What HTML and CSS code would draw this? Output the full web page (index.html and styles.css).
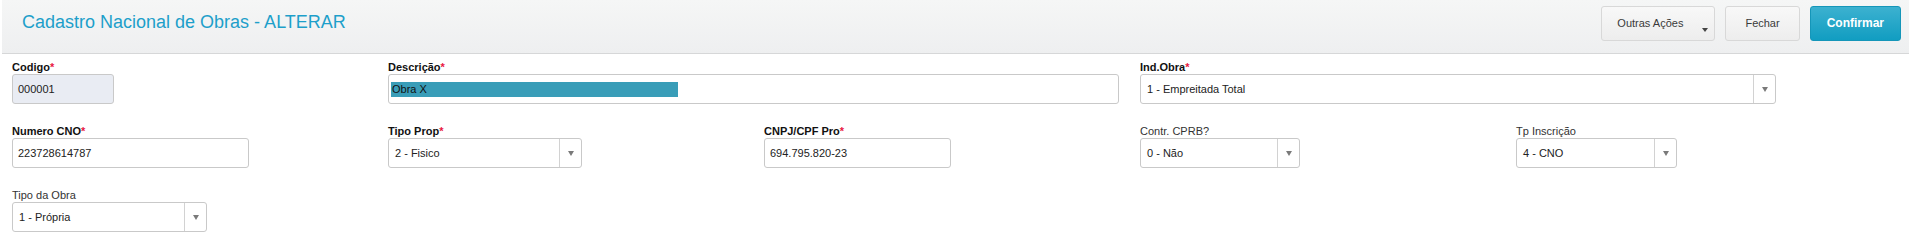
FILE: index.html
```html
<!DOCTYPE html>
<html lang="pt-BR">
<head>
<meta charset="utf-8">
<title>Cadastro Nacional de Obras - ALTERAR</title>
<link rel="stylesheet" href="styles.css">
</head>
<body>
<header class="topbar">
  <h1 class="title">Cadastro Nacional de Obras - ALTERAR</h1>
  <div class="actions">
    <button class="btn btn-menu"><span>Outras Ações</span><span class="caret"></span></button>
    <button class="btn btn-close">Fechar</button>
    <button class="btn btn-primary">Confirmar</button>
  </div>
</header>

<main class="form">
  <div class="field">
    <div class="lbl req">Codigo<span class="ast">*</span></div>
    <div class="box box-disabled w-codigo">000001</div>
  </div>
  <div class="field span2">
    <div class="lbl req">Descrição<span class="ast">*</span></div>
    <div class="box box-text w-desc"><span class="sel">Obra X</span></div>
  </div>
  <div class="field span2">
    <div class="lbl req">Ind.Obra<span class="ast">*</span></div>
    <div class="box select w-ind"><span class="val">1 - Empreitada Total</span><span class="arrow"><span class="tri"></span></span></div>
  </div>

  <div class="field">
    <div class="lbl req">Numero CNO<span class="ast">*</span></div>
    <div class="box w-cno">223728614787</div>
  </div>
  <div class="field">
    <div class="lbl req">Tipo Prop<span class="ast">*</span></div>
    <div class="box select w-prop"><span class="val">2 - Fisico</span><span class="arrow"><span class="tri"></span></span></div>
  </div>
  <div class="field">
    <div class="lbl req">CNPJ/CPF Pro<span class="ast">*</span></div>
    <div class="box w-cnpj">694.795.820-23</div>
  </div>
  <div class="field">
    <div class="lbl">Contr. CPRB?</div>
    <div class="box select w-cprb"><span class="val">0 - Não</span><span class="arrow"><span class="tri"></span></span></div>
  </div>
  <div class="field">
    <div class="lbl">Tp Inscrição</div>
    <div class="box select w-insc"><span class="val">4 - CNO</span><span class="arrow"><span class="tri"></span></span></div>
  </div>

  <div class="field">
    <div class="lbl">Tipo da Obra</div>
    <div class="box select w-tipo"><span class="val">1 - Própria</span><span class="arrow"><span class="tri"></span></span></div>
  </div>
</main>
</body>
</html>
```

FILE: styles.css
```css
* { box-sizing: border-box; }

html, body {
  margin: 0;
  padding: 0;
  background: #ffffff;
  font-family: "Liberation Sans", Arial, sans-serif;
  color: #222;
}

.topbar {
  margin-left: 2px;
  height: 54px;
  display: flex;
  justify-content: space-between;
  align-items: flex-start;
  background: linear-gradient(to bottom, #f5f6f6 0%, #eeeff0 100%);
  border-bottom: 1px solid #d6d7d8;
}

.title {
  margin: 12px 0 0 20px;
  font-size: 18px;
  line-height: 20px;
  font-weight: normal;
  color: #1d9fca;
}

.actions {
  display: flex;
  gap: 10px;
  margin: 6px 8px 0 0;
}

.btn {
  height: 35px;
  border-radius: 3px;
  font-family: "Liberation Sans", Arial, sans-serif;
  font-size: 11px;
  line-height: 13px;
  display: flex;
  align-items: center;
  cursor: pointer;
}

.btn-menu, .btn-close {
  border: 1px solid #d8d8d8;
  background: linear-gradient(to bottom, #f8f8f8 0%, #ededed 100%);
  color: #3a3a3a;
}

.btn-menu {
  padding: 0 6px 0 15px;
}

.btn-menu .caret {
  align-self: flex-end;
  margin: 0 0 8px 19px;
  width: 0;
  height: 0;
  border-left: 3.5px solid transparent;
  border-right: 3.5px solid transparent;
  border-top: 4px solid #444;
}

.btn-close {
  padding: 0 19px;
}

.btn-primary {
  padding: 0 16px;
  border: 1px solid #1596b9;
  background: linear-gradient(to bottom, #3cb1d0 0%, #119dc1 100%);
  color: #ffffff;
  font-weight: bold;
  font-size: 12px;
}

.form {
  display: grid;
  grid-template-columns: repeat(5, 1fr);
  row-gap: 20px;
  padding: 6px 17px 0 12px;
}

.field {
  display: flex;
  flex-direction: column;
  align-items: flex-start;
}

.span2 { grid-column: span 2; }

.lbl {
  height: 14px;
  font-size: 11px;
  line-height: 14px;
  color: #333;
}

.lbl.req {
  font-weight: bold;
  color: #111;
}

.ast {
  color: #e8173f;
}

.box {
  height: 30px;
  border: 1px solid #c9c9c9;
  border-radius: 3px;
  background: #ffffff;
  display: flex;
  align-items: center;
  padding: 0 5px;
  font-size: 11px;
  color: #222;
}

.box-disabled {
  background: #e9ecf3;
}

.box-text {
  padding: 0 2px;
}

.sel {
  display: block;
  width: 287px;
  height: 15px;
  line-height: 15px;
  background: #399db8;
  color: #111;
  padding-left: 1px;
}

.select {
  padding: 0 0 0 6px;
  justify-content: space-between;
}

.select .arrow {
  width: 22px;
  height: 100%;
  border-left: 1px solid #d2d2d2;
  display: flex;
  align-items: center;
  justify-content: center;
}

.tri {
  width: 0;
  height: 0;
  border-left: 3px solid transparent;
  border-right: 3px solid transparent;
  border-top: 5px solid #7a7a7a;
}

.w-codigo { width: 102px; }
.w-desc   { width: 731px; }
.w-ind    { width: 636px; }
.w-cno    { width: 237px; }
.w-prop   { width: 194px; }
.w-cnpj   { width: 187px; }
.w-cprb   { width: 160px; }
.w-insc   { width: 161px; }
.w-tipo   { width: 195px; }
```
